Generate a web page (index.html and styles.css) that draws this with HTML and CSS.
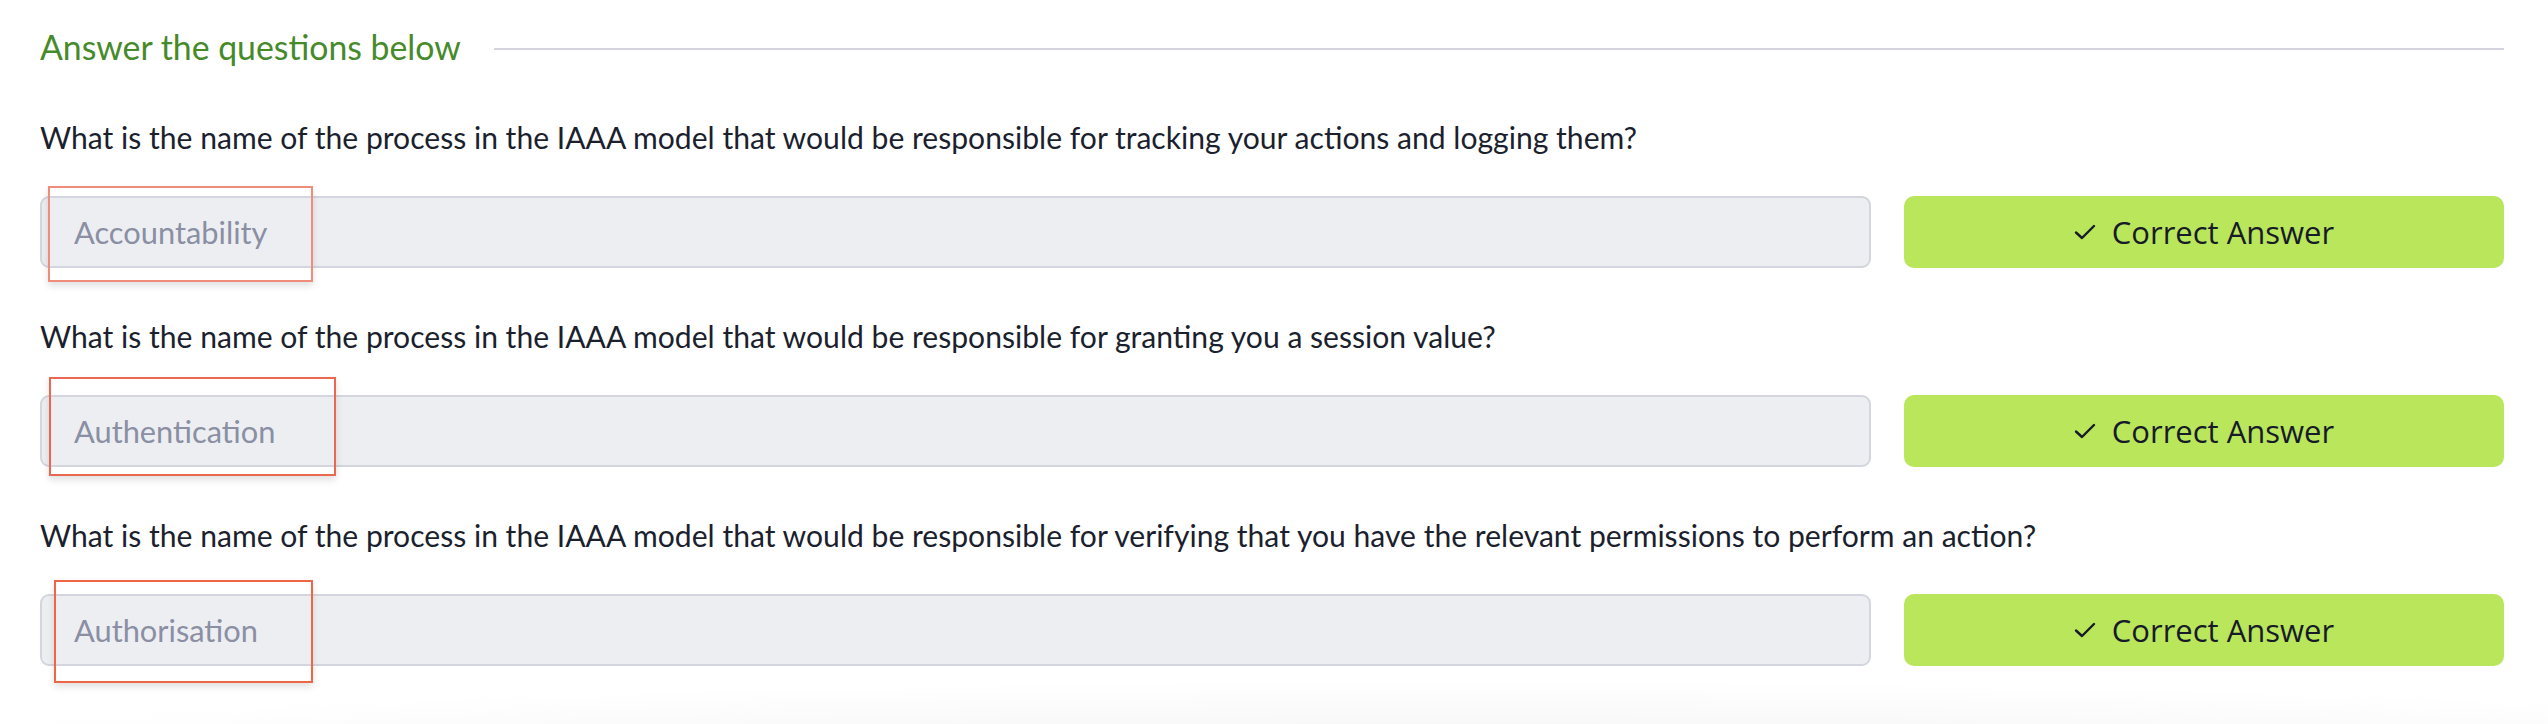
FILE: index.html
```html
<!DOCTYPE html>
<html lang="en">
<head>
<meta charset="utf-8">
<title>Answer the questions below</title>
<link rel="stylesheet" href="styles.css">
</head>
<body>
<main class="page">
  <div class="heading-row">
    <h2 class="heading">Answer the questions below</h2>
    <span class="rule"></span>
  </div>

  <section class="question">
    <p class="q-text">What is the name of the process in the IAAA model that would be responsible for tracking your actions and logging them?</p>
    <div class="answer-row">
      <div class="field">
        <input class="answer-input" type="text" placeholder="Accountability" readonly>
        <span class="annot annot-1"></span>
      </div>
      <button class="btn-correct" type="button">
        <svg class="check" width="22" height="16" viewBox="0 0 22 16" aria-hidden="true"><polyline points="2,8.5 8,14 20,2" fill="none" stroke="currentColor" stroke-width="2.4" stroke-linecap="round" stroke-linejoin="round"/></svg>
        <span>Correct Answer</span>
      </button>
    </div>
  </section>

  <section class="question">
    <p class="q-text">What is the name of the process in the IAAA model that would be responsible for granting you a session value?</p>
    <div class="answer-row">
      <div class="field">
        <input class="answer-input" type="text" placeholder="Authentication" readonly>
        <span class="annot annot-2"></span>
      </div>
      <button class="btn-correct" type="button">
        <svg class="check" width="22" height="16" viewBox="0 0 22 16" aria-hidden="true"><polyline points="2,8.5 8,14 20,2" fill="none" stroke="currentColor" stroke-width="2.4" stroke-linecap="round" stroke-linejoin="round"/></svg>
        <span>Correct Answer</span>
      </button>
    </div>
  </section>

  <section class="question">
    <p class="q-text">What is the name of the process in the IAAA model that would be responsible for verifying that you have the relevant permissions to perform an action?</p>
    <div class="answer-row">
      <div class="field">
        <input class="answer-input" type="text" placeholder="Authorisation" readonly>
        <span class="annot annot-3"></span>
      </div>
      <button class="btn-correct" type="button">
        <svg class="check" width="22" height="16" viewBox="0 0 22 16" aria-hidden="true"><polyline points="2,8.5 8,14 20,2" fill="none" stroke="currentColor" stroke-width="2.4" stroke-linecap="round" stroke-linejoin="round"/></svg>
        <span>Correct Answer</span>
      </button>
    </div>
  </section>
</main>
</body>
</html>
```

FILE: styles.css
```css
* { box-sizing: border-box; }

html, body {
  margin: 0;
  padding: 0;
  height: 100%;
}

body {
  background:
    radial-gradient(ellipse 1700px 90px at 1450px 770px, #f1f1f2 0%, rgba(255,255,255,0) 100%),
    #ffffff;
  font-family: Lato, "Liberation Sans", sans-serif;
  color: #1b1f2e;
  overflow: hidden;
}

.page {
  padding: 23px 44px 0 40px;
}

.heading-row {
  display: flex;
  align-items: center;
  margin-bottom: 43px;
}

.heading {
  margin: 0;
  font-family: Lato, "Liberation Sans", sans-serif;
  font-weight: 400;
  font-size: 33.8px;
  line-height: 48px;
  color: #468a2a;
  white-space: nowrap;
}

.rule {
  flex: 1;
  height: 2px;
  margin-left: 33px;
  margin-top: 3px;
  background: #d3d4dd;
}

.question {
  margin-bottom: 45px;
}

.q-text {
  margin: 0 0 36px;
  font-size: 30.1px;
  line-height: 46px;
  color: #1b1f2e;
  white-space: nowrap;
}

.answer-row {
  display: grid;
  grid-template-columns: 1fr 600px;
  column-gap: 33px;
}

.field {
  position: relative;
}

.answer-input {
  display: block;
  width: 100%;
  height: 72px;
  margin: 0;
  padding: 0 32px;
  border: 2px solid #d3d6de;
  border-radius: 9px;
  background: #edeef2;
  font-family: Lato, "Liberation Sans", sans-serif;
  font-size: 30.8px;
  color: #8a8fa3;
  outline: none;
}

.answer-input::placeholder {
  color: #8a8fa3;
  opacity: 1;
}

.annot {
  position: absolute;
  border: 2px solid #ee7e6a;
  box-shadow: 0 4px 7px rgba(0, 0, 0, 0.12);
  pointer-events: none;
}

.annot-1 { left: 8px;  top: -10px; width: 265px; height: 96px; border-color: #f08c7a; }
.annot-2 { left: 9px;  top: -18px; width: 287px; height: 99px; border-color: #e9684f; }
.annot-3 { left: 14px; top: -14px; width: 259px; height: 103px; border-color: #ee6646; }

.btn-correct {
  display: flex;
  align-items: center;
  justify-content: center;
  gap: 16px;
  height: 72px;
  margin: 0;
  padding: 0;
  border: 0;
  border-radius: 10px;
  background: #b9e65a;
  color: #171b29;
  font-family: "Open Sans", "Noto Sans", sans-serif;
  font-size: 31px;
  font-weight: 400;
  cursor: pointer;
}

.check {
  display: block;
  flex: none;
}
```
